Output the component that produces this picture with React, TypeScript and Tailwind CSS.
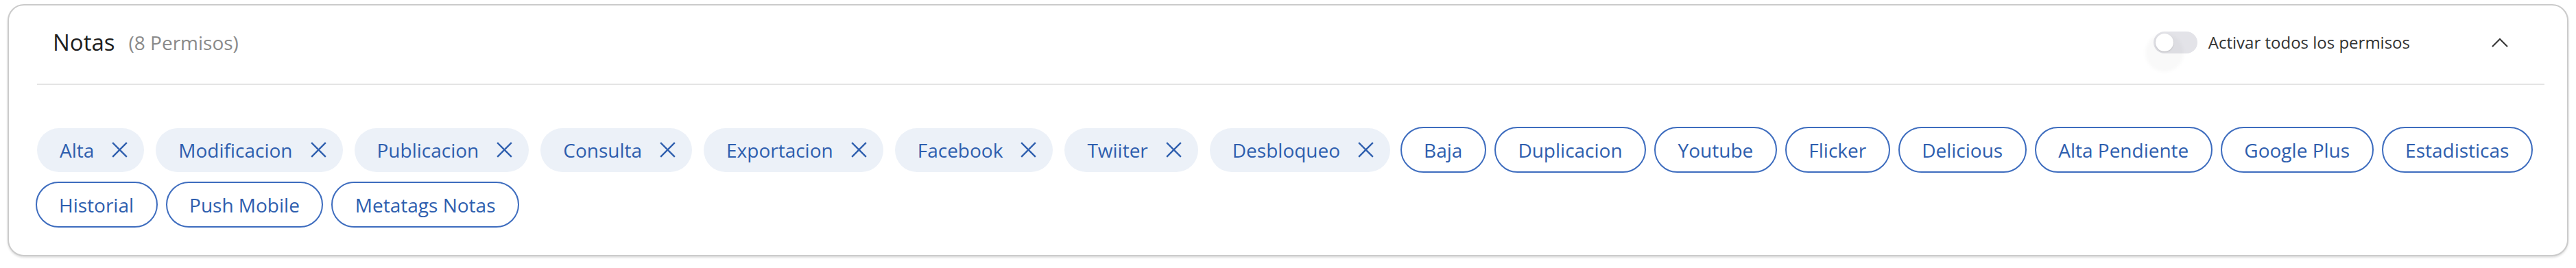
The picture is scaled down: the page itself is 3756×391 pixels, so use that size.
import React, { useState } from 'react';

const activos = ['Alta', 'Modificacion', 'Publicacion', 'Consulta', 'Exportacion', 'Facebook', 'Twiiter', 'Desbloqueo'];
const disponibles = ['Baja', 'Duplicacion', 'Youtube', 'Flicker', 'Delicious', 'Alta Pendiente', 'Google Plus', 'Estadisticas', 'Historial', 'Push Mobile', 'Metatags Notas'];

function CloseIcon() {
    return (
        <svg width="23" height="23" viewBox="0 0 23 23" fill="none" stroke="currentColor" strokeWidth="2.4" strokeLinecap="square">
            <line x1="2" y1="2" x2="21" y2="21" />
            <line x1="21" y1="2" x2="2" y2="21" />
        </svg>
    );
}

export default function App() {
    const [todos, setTodos] = useState(false);
    const [selected, setSelected] = useState<string[]>(activos);

    const others = [...activos, ...disponibles].filter((p) => !selected.includes(p));

    return (
        <div className="h-[391px] overflow-hidden bg-white pt-[6px] px-[11px] font-['Open_Sans',sans-serif]">
            <div className="border-2 border-[#cbcbcb] rounded-[24px] bg-white shadow-[0_2px_3px_rgba(0,0,0,0.12)] pb-[40px]">

                {/* Header */}
                <div className="ml-[41px] mr-[33px]">
                    <div className="h-[114px] pb-[7px] pl-[23px] pr-[53px] flex items-center">
                        <span className="text-[33px] leading-[42px] text-[#1e1e1e]">Notas</span>
                        <span className="ml-[20px] text-[28px] leading-[40px] text-[#8a8a8a]">({selected.length} Permisos)</span>

                        <div className="ml-auto flex items-center">
                            <button
                                onClick={() => setTodos(!todos)}
                                className="relative w-[64px] h-[32px] rounded-full bg-[#e3e3e8] cursor-pointer"
                            >
                                <span className="absolute left-[-12px] top-[3px] w-[56px] h-[56px] rounded-full bg-black/[0.025] blur-[2px]"></span>
                                <span className={`absolute top-[3px] w-[26px] h-[26px] rounded-full bg-white shadow-[0_1px_2px_rgba(0,0,0,0.15)] transition-all ${todos ? 'left-[35px]' : 'left-[3px]'}`}></span>
                            </button>
                            <span className="ml-[16px] text-[24px] leading-[32px] text-[#333333]">Activar todos los permisos</span>

                            <svg className="ml-[119px]" width="24" height="14" viewBox="0 0 24 14" fill="none" stroke="#333333" strokeWidth="2">
                                <polyline points="1,13 12,2 23,13" />
                            </svg>
                        </div>
                    </div>
                    <div className="h-[2px] bg-[#e4e4e4]"></div>
                </div>

                {/* Chips */}
                <div className="pl-[38.5px] pr-[10px] pt-[61px] flex flex-wrap items-center gap-x-[12px] gap-y-[13px]">
                    {selected.map((p) => (
                        <div key={p} className="mx-[2.5px] h-[64px] pl-[33px] pr-[24px] flex items-center rounded-full bg-[#ecf1f8] text-[#2e5eae]">
                            <span className="text-[28px] leading-[38px]">{p}</span>
                            <button onClick={() => setSelected(selected.filter((s) => s !== p))} className="ml-[26px] cursor-pointer">
                                <CloseIcon />
                            </button>
                        </div>
                    ))}
                    {others.map((p) => (
                        <button
                            key={p}
                            onClick={() => setSelected([...selected, p])}
                            className="h-[67px] px-[32.5px] flex items-center rounded-full border-2 border-[#3d6cbe] bg-white text-[#2e5eae] cursor-pointer"
                        >
                            <span className="text-[28px] leading-[38px]">{p}</span>
                        </button>
                    ))}
                </div>

            </div>
        </div>
    );
}
